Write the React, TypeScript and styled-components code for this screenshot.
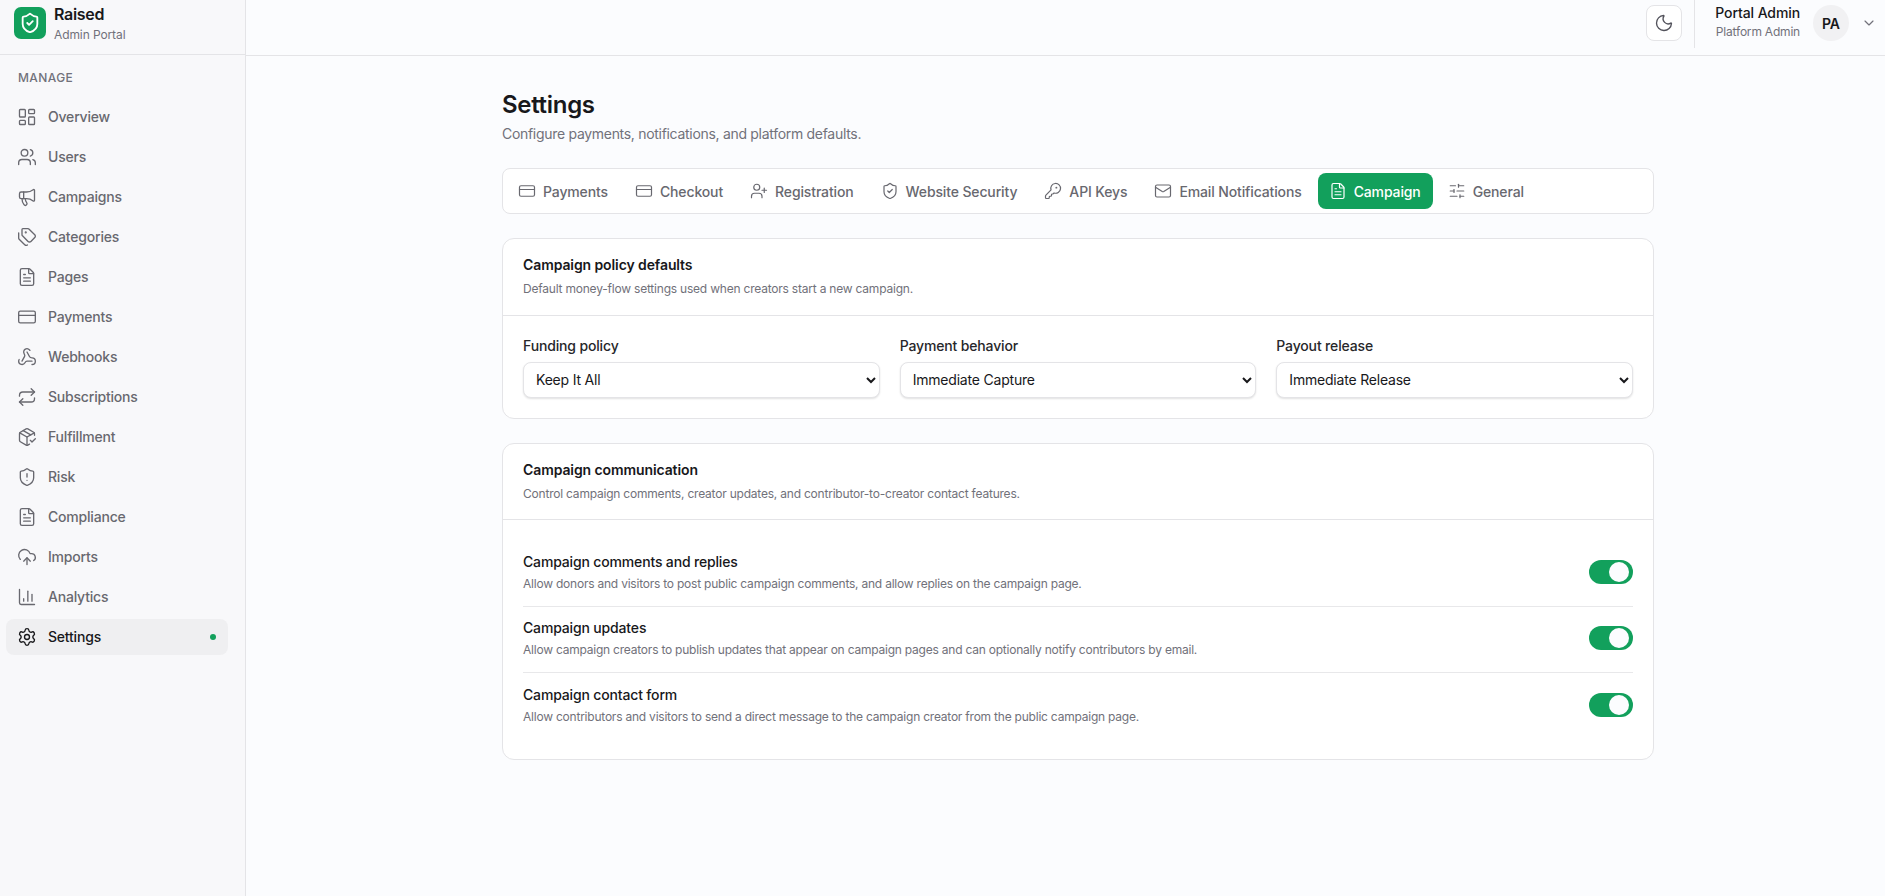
import React from "react";
import styled, { createGlobalStyle } from "styled-components";
import {
  LayoutDashboard, Users, Megaphone, Tags, FileText, CreditCard, Webhook, Repeat, PackageCheck,
  ShieldAlert, CloudUpload, ChartColumn, Settings, ShieldCheck, Moon, ChevronDown, UserPlus,
  KeyRound, Mail, SlidersHorizontal,
} from "lucide-react";

const Global = createGlobalStyle`
  html, body { margin: 0; padding: 0; height: 100%; }
  body { font-family: Inter, "Liberation Sans", sans-serif; color: #18181b; background: #fbfcfe; }
  * { box-sizing: border-box; }
`;

const Shell = styled.div`
  display: flex;
  width: 100%;
  height: 896px;
  overflow: hidden;
`;
const Sidebar = styled.aside`
  width: 246px;
  flex: none;
  background: #f8f8fa;
  border-right: 1px solid #e4e4e7;
  display: flex;
  flex-direction: column;
`;
const Brand = styled.div`
  height: 55px;
  border-bottom: 1px solid #e4e4e7;
  display: flex;
  align-items: flex-start;
  gap: 8px;
  padding: 4px 14px 0;
`;
const LogoMark = styled.div`
  width: 32px;
  height: 32px;
  margin-top: 3px;
  border-radius: 7px;
  background: #12a05c;
  color: #fff;
  display: flex;
  align-items: center;
  justify-content: center;
`;
const BrandText = styled.div`
  display: flex;
  flex-direction: column;
  gap: 3px;
`;
const BrandName = styled.div`
  font-size: 16px;
  line-height: 20px;
  font-weight: 600;
  letter-spacing: -0.3px;
  color: #18181b;
`;
const BrandSub = styled.div`
  font-size: 12px;
  line-height: 15px;
  letter-spacing: -0.1px;
  color: #71717a;
`;
const Nav = styled.nav`
  display: flex;
  flex-direction: column;
  padding: 12px 17px 16px 6px;
`;
const NavLabel = styled.div`
  font-size: 12px;
  line-height: 16px;
  letter-spacing: 0.4px;
  color: #71717a;
  font-weight: 500;
  padding: 3px 12px 12.5px;
`;
const NavItem = styled.div<{ $active?: boolean }>`
  height: 36px;
  margin-bottom: 4px;
  border-radius: 8px;
  display: flex;
  align-items: center;
  gap: 11px;
  padding: 0 12px 0 11px;
  font-size: 14px;
  font-weight: 500;
  letter-spacing: -0.2px;
  color: ${(p) => (p.$active ? "#18181b" : "#68686f")};
  background: ${(p) => (p.$active ? "#efeff1" : "transparent")};
  svg { flex: none; }
`;
const Dot = styled.span`
  width: 6px;
  height: 6px;
  border-radius: 50%;
  background: #12a05c;
  margin-left: auto;
`;
const Column = styled.div`
  flex: 1;
  min-width: 0;
  display: flex;
  flex-direction: column;
`;
const Topbar = styled.header`
  height: 56px;
  flex: none;
  background: #fbfcfe;
  border-bottom: 1px solid #e4e4e7;
  display: flex;
  align-items: flex-start;
  justify-content: flex-end;
  padding-right: 8px;
`;
const ThemeButton = styled.button`
  width: 36px;
  height: 36px;
  margin-top: 5px;
  background: #fff;
  border: 1px solid #e4e4e7;
  border-radius: 8px;
  color: #52525b;
  display: flex;
  align-items: center;
  justify-content: center;
  padding: 0;
`;
const Divider = styled.div`
  width: 1px;
  height: 48px;
  background: #e4e4e7;
  margin: 0 12px 0 12px;
`;
const UserBox = styled.div`
  display: flex;
  align-items: center;
  margin-top: 5px;
  height: 36px;
`;
const UserText = styled.div`
  display: flex;
  flex-direction: column;
  align-items: flex-end;
  gap: 1px;
  margin: -3px 13px 0 8px;
`;
const UserName = styled.div`
  font-size: 14px;
  line-height: 20px;
  font-weight: 500;
  letter-spacing: -0.1px;
  color: #18181b;
`;
const UserRole = styled.div`
  font-size: 12px;
  line-height: 16px;
  letter-spacing: -0.2px;
  color: #71717a;
`;
const Avatar = styled.div`
  width: 36px;
  height: 36px;
  border-radius: 50%;
  background: #f1f1f3;
  font-size: 14px;
  font-weight: 600;
  display: flex;
  align-items: center;
  justify-content: center;
  margin-right: 12px;
`;
const Main = styled.main`
  flex: 1;
  padding: 33px 0 0 256px;
  background: #fbfcfe;
`;
const Content = styled.div`
  width: 1152px;
`;
const Title = styled.h1`
  margin: 0;
  font-size: 24px;
  line-height: 32px;
  font-weight: 600;
  letter-spacing: -0.3px;
  color: #18181b;
`;
const Subtitle = styled.p`
  margin: 3px 0 0;
  font-size: 14px;
  line-height: 20px;
  letter-spacing: -0.3px;
  color: #71717a;
`;
const Tabs = styled.div`
  margin-top: 24px;
  height: 46px;
  background: #fff;
  border: 1px solid #e4e4e7;
  border-radius: 8px;
  display: flex;
  align-items: center;
  padding: 0 4px;
`;
const Tab = styled.div<{ $active?: boolean }>`
  height: 36px;
  border-radius: 8px;
  display: flex;
  align-items: center;
  gap: 7px;
  padding: 0 12px 0 11px;
  font-size: 14px;
  font-weight: 500;
  letter-spacing: -0.13px;
  white-space: nowrap;
  color: ${(p) => (p.$active ? "#fff" : "#68686f")};
  background: ${(p) => (p.$active ? "#12a05c" : "transparent")};
  margin-right: 4px;
`;
const Card = styled.section`
  margin-top: 24px;
  background: #fff;
  border: 1px solid #e4e4e7;
  border-radius: 12px;
`;
const CardHeader = styled.div`
  padding: 16px 20px;
  height: 76.7px;
  border-bottom: 1px solid #e4e4e7;
`;
const CardTitle = styled.h2`
  margin: 0;
  font-size: 14px;
  line-height: 20px;
  font-weight: 600;
  letter-spacing: -0.1px;
  color: #18181b;
`;
const CardDesc = styled.p`
  margin: 6px 0 0;
  font-size: 12px;
  line-height: 16px;
  letter-spacing: -0.21px;
  color: #71717a;
`;
const FieldGrid = styled.div`
  display: grid;
  grid-template-columns: repeat(3, 1fr);
  gap: 20px;
  padding: 20px;
`;
const Field = styled.label`
  display: flex;
  flex-direction: column;
  gap: 6px;
`;
const FieldLabel = styled.span`
  font-size: 14px;
  line-height: 20px;
  font-weight: 500;
  letter-spacing: -0.15px;
  color: #27272a;
`;
const Select = styled.select`
  height: 36px;
  width: 100%;
  background: #fff;
  border: 1px solid #e4e4e7;
  border-radius: 8px;
  padding: 0 8px;
  font: 400 14px Inter, sans-serif;
  letter-spacing: -0.2px;
  color: #18181b;
  box-shadow: 0 1px 2px rgba(0, 0, 0, 0.12);
`;
const RowList = styled.div`
  padding: 20px;
`;
const Row = styled.div<{ $last?: boolean }>`
  display: flex;
  align-items: center;
  justify-content: space-between;
  padding: 11px 0 13px;
  height: 66.3px;
  border-bottom: ${(p) => (p.$last ? "none" : "1px solid #e8e8ea")};
`;
const RowText = styled.div`
  display: flex;
  flex-direction: column;
  gap: 4px;
`;
const RowTitle = styled.div`
  font-size: 14px;
  line-height: 20px;
  font-weight: 500;
  letter-spacing: -0.16px;
  color: #18181b;
`;
const RowDesc = styled.div`
  font-size: 12px;
  line-height: 16px;
  letter-spacing: -0.22px;
  color: #71717a;
`;
const Toggle = styled.div`
  width: 44px;
  height: 24px;
  border-radius: 12px;
  background: #12a05c;
  display: flex;
  align-items: center;
  justify-content: flex-end;
  padding: 0 4px;
`;
const Knob = styled.span`
  width: 20px;
  height: 20px;
  border-radius: 50%;
  background: #fbfcfe;
`;

const navItems = [
  ["Overview", LayoutDashboard], ["Users", Users], ["Campaigns", Megaphone], ["Categories", Tags],
  ["Pages", FileText], ["Payments", CreditCard], ["Webhooks", Webhook], ["Subscriptions", Repeat],
  ["Fulfillment", PackageCheck], ["Risk", ShieldAlert], ["Compliance", FileText], ["Imports", CloudUpload],
  ["Analytics", ChartColumn],
] as const;

const tabs = [
  ["Payments", CreditCard], ["Checkout", CreditCard], ["Registration", UserPlus], ["Website Security", ShieldCheck],
  ["API Keys", KeyRound], ["Email Notifications", Mail], ["Campaign", FileText], ["General", SlidersHorizontal],
] as const;

const fields = [
  ["Funding policy", "Keep It All"],
  ["Payment behavior", "Immediate Capture"],
  ["Payout release", "Immediate Release"],
];

const rows = [
  ["Campaign comments and replies", "Allow donors and visitors to post public campaign comments, and allow replies on the campaign page."],
  ["Campaign updates", "Allow campaign creators to publish updates that appear on campaign pages and can optionally notify contributors by email."],
  ["Campaign contact form", "Allow contributors and visitors to send a direct message to the campaign creator from the public campaign page."],
];

export default function App() {
  return (
    <Shell>
      <Global />
      <Sidebar>
        <Brand>
          <LogoMark><ShieldCheck size={22} strokeWidth={2} /></LogoMark>
          <BrandText>
            <BrandName>Raised</BrandName>
            <BrandSub>Admin Portal</BrandSub>
          </BrandText>
        </Brand>
        <Nav>
          <NavLabel>MANAGE</NavLabel>
          {navItems.map(([label, Icon]) => (
            <NavItem key={label}><Icon size={20} strokeWidth={1.6} />{label}</NavItem>
          ))}
          <NavItem $active><Settings size={20} strokeWidth={1.6} />Settings<Dot /></NavItem>
        </Nav>
      </Sidebar>
      <Column>
        <Topbar>
          <ThemeButton><Moon size={20} strokeWidth={1.6} /></ThemeButton>
          <Divider />
          <UserBox>
            <UserText>
              <UserName>Portal Admin</UserName>
              <UserRole>Platform Admin</UserRole>
            </UserText>
            <Avatar>PA</Avatar>
            <ChevronDown size={16} strokeWidth={1.75} color="#71717a" />
          </UserBox>
        </Topbar>
        <Main>
          <Content>
            <Title>Settings</Title>
            <Subtitle>Configure payments, notifications, and platform defaults.</Subtitle>
            <Tabs>
              {tabs.map(([label, Icon]) => (
                <Tab key={label} $active={label === "Campaign"}><Icon size={18} strokeWidth={1.6} />{label}</Tab>
              ))}
            </Tabs>
            <Card>
              <CardHeader>
                <CardTitle>Campaign policy defaults</CardTitle>
                <CardDesc>Default money-flow settings used when creators start a new campaign.</CardDesc>
              </CardHeader>
              <FieldGrid>
                {fields.map(([label, value]) => (
                  <Field key={label}>
                    <FieldLabel>{label}</FieldLabel>
                    <Select defaultValue={value}><option>{value}</option></Select>
                  </Field>
                ))}
              </FieldGrid>
            </Card>
            <Card>
              <CardHeader>
                <CardTitle>Campaign communication</CardTitle>
                <CardDesc>Control campaign comments, creator updates, and contributor-to-creator contact features.</CardDesc>
              </CardHeader>
              <RowList>
                {rows.map(([title, desc], i) => (
                  <Row key={title} $last={i === rows.length - 1}>
                    <RowText>
                      <RowTitle>{title}</RowTitle>
                      <RowDesc>{desc}</RowDesc>
                    </RowText>
                    <Toggle><Knob /></Toggle>
                  </Row>
                ))}
              </RowList>
            </Card>
          </Content>
        </Main>
      </Column>
    </Shell>
  );
}
